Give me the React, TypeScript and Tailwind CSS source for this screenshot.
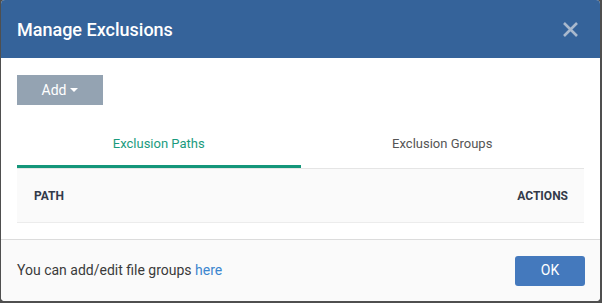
export default function App() {
  return (
    <div
      className="h-[303px] w-[602px] bg-[#4f4f4f] pb-[2px] pl-[1px] pr-[2px]"
      style={{ fontFamily: 'Roboto, "Liberation Sans", sans-serif' }}
    >
      <div className="flex h-full flex-col overflow-hidden rounded-[4px] bg-white">
        {/* header */}
        <div className="flex h-[58px] items-center justify-between bg-[#35639a] pl-4 pr-[21px]">
          <h2 className="text-[18px] font-medium text-white">Manage Exclusions</h2>
          <svg width="17" height="15" viewBox="0 0 17 15" aria-hidden>
            <path d="M2 1 L15 14 M15 1 L2 14" stroke="#a9b9cd" strokeWidth="2.6" strokeLinecap="butt" />
          </svg>
        </div>

        {/* body */}
        <div className="flex-1 px-4 pt-[17px]">
          <button className="flex h-[30px] w-[86px] items-center justify-center gap-1 bg-[#94a3b2] text-[14px] text-white">
            Add
            <svg width="8" height="4" viewBox="0 0 8 4" aria-hidden>
              <path d="M0 0 L8 0 L4 4 Z" fill="white" />
            </svg>
          </button>

          <div className="mt-[25px] flex border-b border-[#e5e5e5]">
            <div className="flex h-[38px] flex-1 items-start justify-center border-b-[3px] border-[#14967a] pt-[4px] text-[13px] text-[#1a9b7e]">
              Exclusion Paths
            </div>
            <div className="flex h-[38px] flex-1 items-start justify-center pt-[4px] text-[13px] text-[#555]">
              Exclusion Groups
            </div>
          </div>

          <div className="flex h-[54px] items-center justify-between border-b border-[#ececec] bg-[#fafafa] pl-[17px] pr-[16px] text-[12px] font-bold text-[#333a4a]">
            <span>PATH</span>
            <span>ACTIONS</span>
          </div>
        </div>

        {/* footer */}
        <div className="flex h-[62px] items-center justify-between border-t border-[#dcdcdc] bg-[#fafafa] pl-4 pr-[15px]">
          <p className="text-[14px] text-[#3a3a3a]">
            You can add/edit file groups <a className="text-[#3c86cf]">here</a>
          </p>
          <button className="h-[30px] w-[70px] rounded-[3px] bg-[#4479bd] text-[14px] text-white">OK</button>
        </div>
      </div>
    </div>
  );
}
